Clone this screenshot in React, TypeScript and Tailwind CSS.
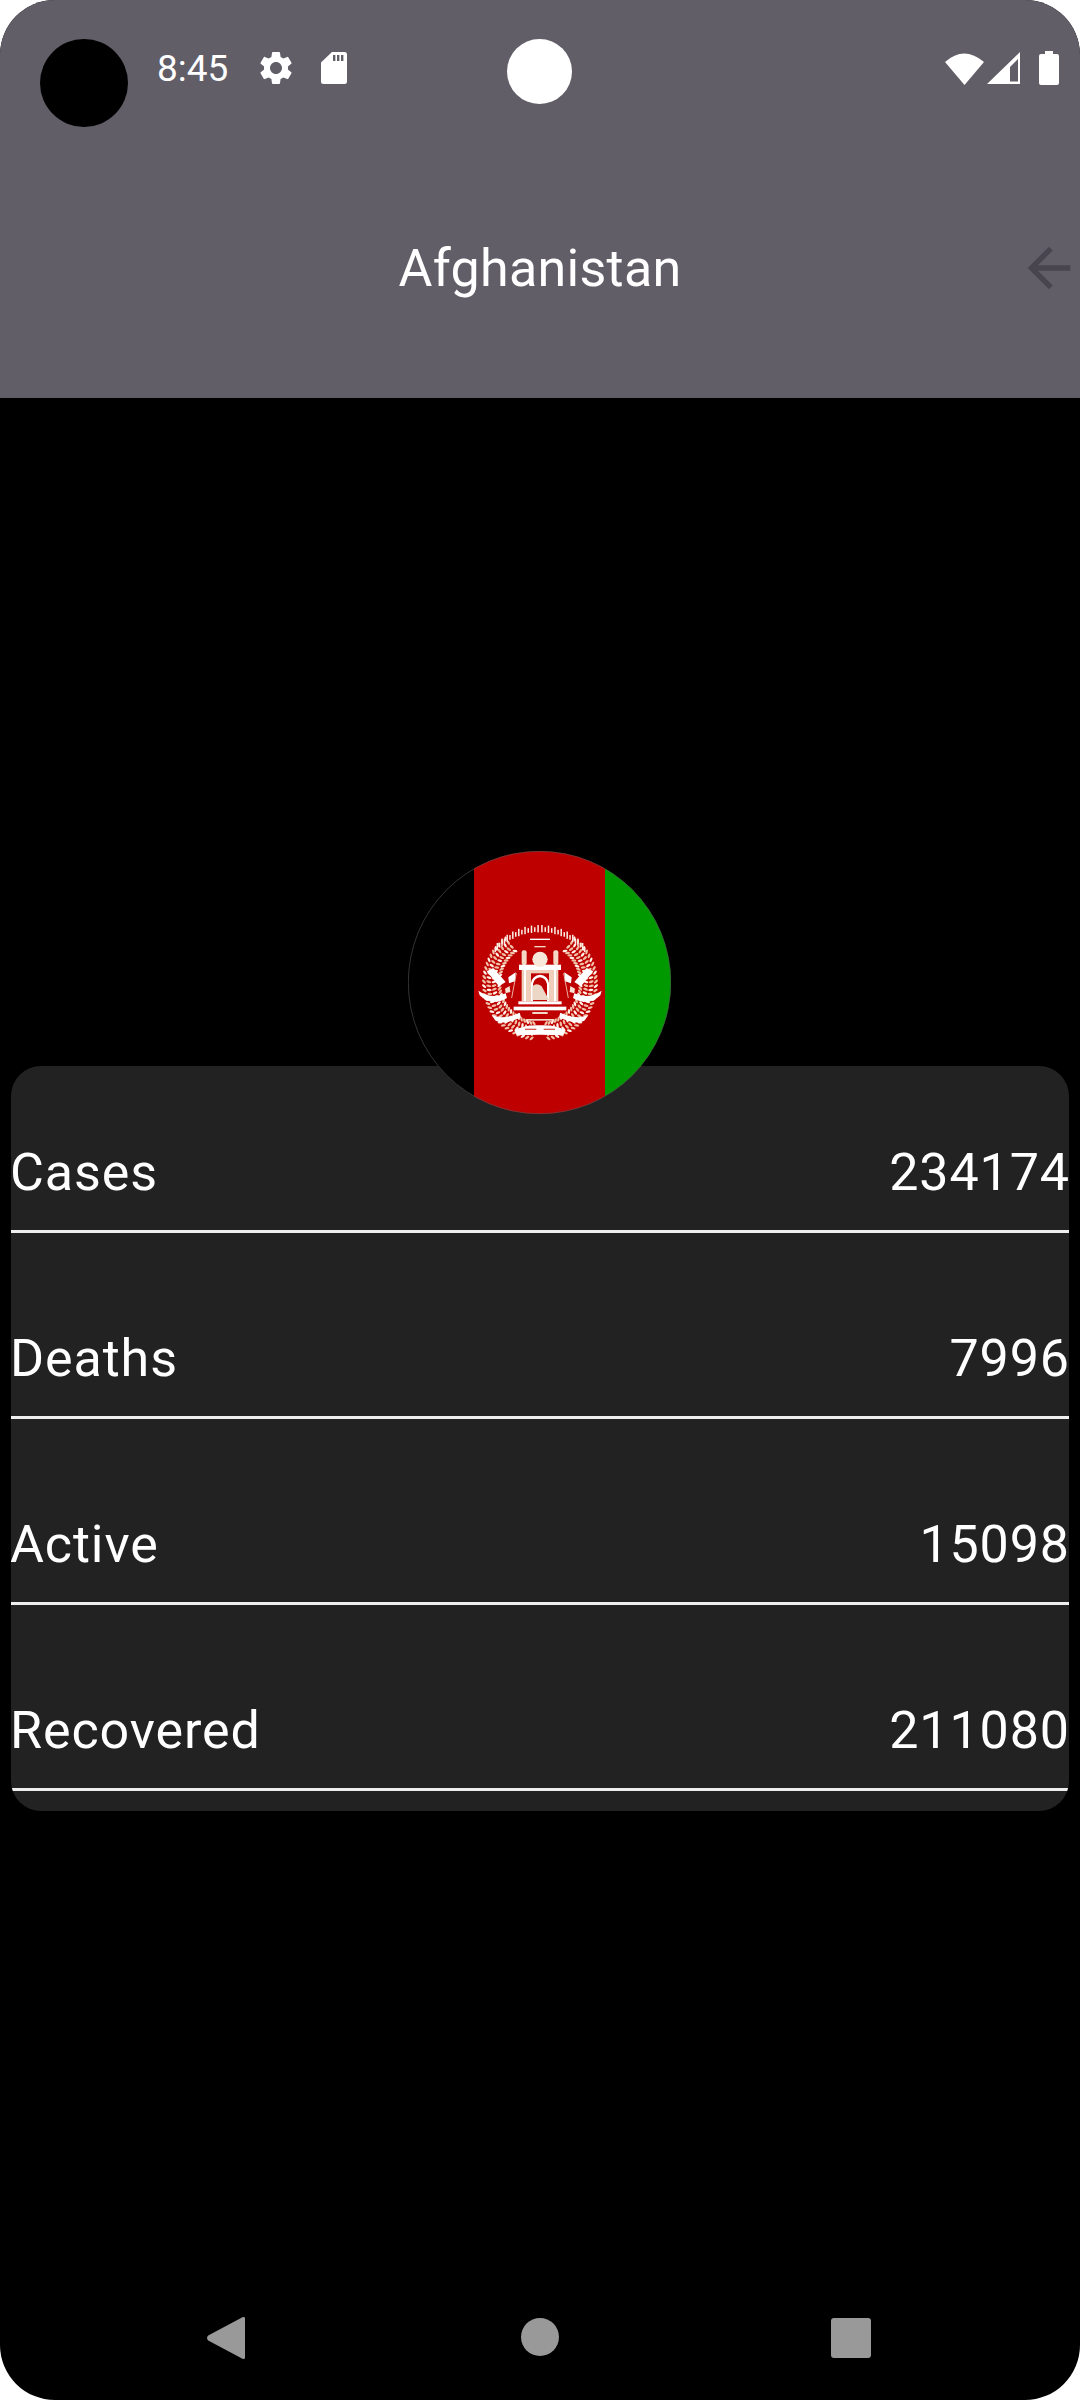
const stats = [
  { label: "Cases", value: "234174" },
  { label: "Deaths", value: "7996" },
  { label: "Active", value: "15098" },
  { label: "Recovered", value: "211080" },
];

const ringAngles = Array.from({ length: 30 }, (_, i) => 38 + i * 4.6);
const arcAngles = Array.from({ length: 16 }, (_, i) => 2 + i * 3.3);

// one half of the emblem, drawn twice and mirrored
function EmblemHalf() {
  return (
    <g>
      {ringAngles.map((deg, i) =>
        [122, 138, 154, 168].map((r, j) => {
          const a = (deg * Math.PI) / 180;
          const x = 195 - Math.sin(a) * r;
          const y = 195 - Math.cos(a) * r;
          return (
            <ellipse
              key={`${deg}-${r}`}
              cx={x}
              cy={y}
              rx="3.6"
              ry="7.5"
              transform={`rotate(${-deg + (j - 1.5) * 28} ${x} ${y})`}
              fill={(i + j) % 3 === 0 ? "#fff3e8" : "#efc0a6"}
            />
          );
        }),
      )}
      {arcAngles.map((deg, i) => {
        const a = (deg * Math.PI) / 180;
        return (
          <rect
            key={deg}
            x={195 - Math.sin(a) * 172 - 2}
            y={195 - Math.cos(a) * 162 - (i % 2 === 0 ? 12 : 6)}
            width="4.5"
            height={i % 2 === 0 ? 22 : 14}
            fill="#fbeee6"
          />
        );
      })}
      <path d="M35 160 L55 150 L92 192 L72 205 Z" fill="#fff" />
      <path d="M10 218 Q50 245 92 226 L96 240 Q50 268 14 232 Z" fill="#fff" />
      <path d="M50 292 Q90 306 134 284 L138 298 Q90 322 62 308 Z" fill="#fff" />
      <path d="M118 336 Q150 320 195 322 L195 350 L125 352 Z" fill="#fff" />
      <rect x="150" y="332" width="34" height="4" fill="#d65a50" />
      <path d="M122 163 L100 178 L102 196 L120 190 Z" fill="#fff" />
      <path d="M104 204 L90 212 L92 226 L106 222 Z" fill="#f6e2d4" />
      <path d="M124 165 L110 240" stroke="#f3d3c0" strokeWidth="2.5" />
      <rect x="140" y="97" width="15" height="44" rx="6" fill="#f4d9c6" />
      <rect x="132" y="140" width="63" height="16" fill="#fff" />
      <rect x="140" y="156" width="28" height="94" fill="#f0cfba" />
      <rect x="147" y="156" width="6" height="94" fill="#fff" />
      <rect x="168" y="156" width="27" height="10" fill="#f0cfba" />
      <path d="M195 170 Q172 172 168 195 V250 H174 V198 Q178 180 195 178 Z" fill="#fff" />
      <rect x="130" y="250" width="65" height="9" fill="#fff" />
      <rect x="116" y="266" width="79" height="11" fill="#fff" />
      <rect x="172" y="282" width="23" height="6" fill="#f3d9c8" />
      <rect x="152" y="303" width="43" height="5" fill="#f3d9c8" />
      <rect x="165" y="62" width="30" height="4" fill="#fff" />
      <rect x="178" y="84" width="17" height="4" fill="#f3d9c8" />
    </g>
  );
}

function Emblem() {
  return (
    <g transform="translate(67 67) scale(0.3333)">
      <EmblemHalf />
      <g transform="translate(390 0) scale(-1 1)">
        <EmblemHalf />
      </g>
      <circle cx="195" cy="124" r="23" fill="#f8e8da" />
      <path d="M172 246 V205 Q185 192 200 205 L222 246 Z" fill="#ecd6c6" />
    </g>
  );
}

export default function App() {
  return (
    <div className="w-[1080px] h-[2400px] bg-white font-['Roboto',sans-serif]">
      <div className="relative flex flex-col w-full h-full rounded-[55px] bg-black overflow-hidden text-white">
        <div className="h-[398px] bg-[#615e68] shrink-0">
          <div className="flex items-center h-[36px] mt-[50px] pl-[157px] pr-[21px]">
            <span className="text-[37px] leading-none w-[99px]">8:45</span>
            <svg viewBox="0 0 24 24" className="w-[40px] h-[40px] shrink-0" fill="#fff">
              <path d="M19.14 12.94c.04-.3.06-.61.06-.94 0-.32-.02-.64-.07-.94l2.03-1.58a.49.49 0 0 0 .12-.61l-1.92-3.32a.488.488 0 0 0-.59-.22l-2.39.96c-.5-.38-1.03-.7-1.62-.94l-.36-2.54a.484.484 0 0 0-.48-.41h-3.84c-.24 0-.43.17-.47.41l-.36 2.54c-.59.24-1.13.57-1.62.94l-2.39-.96c-.22-.08-.47 0-.59.22L2.74 8.87c-.12.21-.08.47.12.61l2.03 1.58c-.05.3-.09.63-.09.94s.02.64.07.94l-2.03 1.58a.49.49 0 0 0-.12.61l1.92 3.32c.12.22.37.29.59.22l2.39-.96c.5.38 1.03.7 1.62.94l.36 2.54c.05.24.24.41.48.41h3.84c.24 0 .44-.17.47-.41l.36-2.54c.59-.24 1.13-.56 1.62-.94l2.39.96c.22.08.47 0 .59-.22l1.92-3.32c.12-.22.07-.47-.12-.61l-2.01-1.58zM12 15.6c-1.98 0-3.6-1.62-3.6-3.6s1.62-3.6 3.6-3.6 3.6 1.62 3.6 3.6-1.62 3.6-3.6 3.6z" />
            </svg>
            <svg viewBox="0 0 26 32" className="w-[26px] h-[32px] ml-[25px] shrink-0" fill="#fff">
              <path fillRule="evenodd" d="M11 0H23.5a2.5 2.5 0 0 1 2.5 2.5V29.5a2.5 2.5 0 0 1-2.5 2.5H2.5A2.5 2.5 0 0 1 0 29.5V10.5zM12 3v6h2.4V3zM16 3v6h2.4V3zM20 3v6h2.4V3z" />
            </svg>
            <div className="flex-1" />
            <svg viewBox="0 0 39 33" className="w-[39px] h-[33px] shrink-0" fill="#fff">
              <path d="M0 10Q19 -7 39 10L19.5 33z" />
            </svg>
            <svg viewBox="0 0 33 32" className="w-[33px] h-[32px] ml-[3px] shrink-0" fill="#fff">
              <path fillRule="evenodd" d="M33 0V32H0zM31 29.5V7L23 15V29.5z" />
            </svg>
            <svg viewBox="0 0 20 34" className="w-[20px] h-[34px] ml-[19px] shrink-0" fill="#fff">
              <path d="M6 0H14V3H18a2 2 0 0 1 2 2V32a2 2 0 0 1-2 2H2a2 2 0 0 1-2-2V5a2 2 0 0 1 2-2H6z" />
            </svg>
          </div>
          <div className="relative flex items-center justify-center h-[66px] mt-[150px]">
            <span className="text-[52px] leading-none tracking-[0.3px]">Afghanistan</span>
            <svg viewBox="0 0 24 24" className="absolute left-[1017px] top-0 w-[64px] h-[64px]" fill="#49454f">
              <path d="M20 11H7.83l5.59-5.59L12 4l-8 8 8 8 1.41-1.41L7.83 13H20v-2z" />
            </svg>
          </div>
        </div>

        <div className="flex flex-col flex-1 pt-[453px] px-[11px]">
          <svg viewBox="0 0 263 263" className="relative z-10 self-center w-[263px] h-[263px] -mb-[48px] mr-[1px] shrink-0">
            <defs>
              <clipPath id="flag-clip">
                <circle cx="131.5" cy="131.5" r="131.5" />
              </clipPath>
            </defs>
            <g clipPath="url(#flag-clip)">
              <rect x="0" y="0" width="66" height="263" fill="#000" />
              <rect x="66" y="0" width="131" height="263" fill="#be0000" />
              <rect x="197" y="0" width="66" height="263" fill="#009900" />
              <Emblem />
            </g>
            <circle cx="131.5" cy="131.5" r="131.2" fill="none" stroke="#555" strokeWidth="0.6" />
          </svg>
          <div className="bg-[#222222] rounded-[30px] overflow-hidden pt-px">
            {stats.map((s) => (
              <div key={s.label} className="flex justify-between items-end h-[166px] mb-[20px] pb-[27px] border-b-[3px] border-[#eeeeee] text-[52px] leading-[60px] tracking-[0.9px]">
                <span className="-ml-px">{s.label}</span>
                <span className="-mr-px">{s.value}</span>
              </div>
            ))}
          </div>
        </div>

        <div className="absolute left-0 right-0 bottom-[39px] h-[44px]">
          <svg viewBox="0 0 38 42" className="absolute left-[207px] top-0 w-[38px] h-[42px]" fill="#999999">
            <path d="M35 0.6c1.5-1.4 3-.6 3 1v38.8c0 1.6-1.5 2.4-3 1L1.2 23.5c-1.6-1.4-1.6-3.6 0-5z" />
          </svg>
          <div className="absolute left-[521px] top-[1px] w-[38px] h-[38px] rounded-full bg-[#999999]" />
          <div className="absolute left-[831px] top-[1px] w-[40px] h-[40px] rounded-[3px] bg-[#999999]" />
        </div>

        <div className="absolute left-[40px] top-[39px] w-[88px] h-[88px] rounded-full bg-black" />
        <div className="absolute left-[507px] top-[39px] w-[65px] h-[65px] rounded-full bg-white" />
      </div>
    </div>
  );
}
